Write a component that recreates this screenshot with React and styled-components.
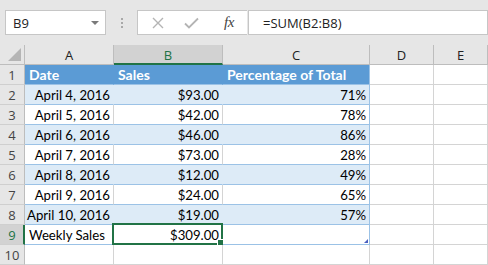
import React from "react";
import styled, { createGlobalStyle, css } from "styled-components";

const Global = createGlobalStyle`
  html, body { margin: 0; padding: 0; background: #ffffff; }
  body { width: 488px; height: 265px; overflow: hidden; }
  * { box-sizing: border-box; }
`;

const Page = styled.div`
  width: 488px;
  height: 265px;
  overflow: hidden;
  background: #ffffff;
  font-family: "Lato", "Liberation Sans", sans-serif;
`;

const Toolbar = styled.div`
  height: 45px;
  background: #e6e6e6;
  display: flex;
  align-items: flex-start;
  padding: 10px 0 0 5px;
`;

const NameBox = styled.div`
  width: 101px;
  height: 25px;
  background: #fff;
  border: 1px solid #c6c6c6;
  display: flex;
  align-items: center;
  justify-content: space-between;
  padding: 0 6px 0 7px;
  font-family: "Open Sans", "Noto Sans", sans-serif;
  font-size: 13px;
  color: #222;
`;

const Caret = styled.span`
  width: 0;
  height: 0;
  border-left: 4px solid transparent;
  border-right: 4px solid transparent;
  border-top: 4px solid #7a7a7a;
`;

const Grip = styled.div`
  width: 31px;
  height: 25px;
  display: flex;
  flex-direction: column;
  align-items: center;
  justify-content: center;
  gap: 2px;
  span {
    width: 2px;
    height: 2px;
    background: #a8a8a8;
  }
`;

const IconBox = styled.div`
  width: 110px;
  height: 25px;
  background: #fff;
  border: 1px solid #c6c6c6;
  border-right: none;
  display: flex;
  align-items: center;
  padding-left: 14px;
  gap: 20px;
`;

const Fx = styled.span`
  font-family: "Liberation Serif", serif;
  font-style: italic;
  font-size: 15px;
  color: #444;
  margin-left: 5px;
  letter-spacing: -0.5px;
`;

const FormulaBox = styled.div`
  flex: 1;
  height: 25px;
  background: #fff;
  border: 1px solid #c6c6c6;
  display: flex;
  align-items: center;
  padding-left: 14px;
  font-family: "Open Sans", "Noto Sans", sans-serif;
  font-size: 13px;
  color: #222;
`;

const Sep = styled.div`
  width: 1px;
  height: 25px;
  background: #e6e6e6;
`;

const Grid = styled.div`
  display: grid;
  grid-template-columns: 25px 89px 109px 147px 64px 1fr;
  grid-auto-rows: 20px;
`;

const Corner = styled.div`
  background: #e6e6e6;
  border-right: 1px solid #bdbdbd;
  border-bottom: 1px solid #bdbdbd;
  position: relative;
  &::after {
    content: "";
    position: absolute;
    right: 3px;
    bottom: 3px;
    width: 0;
    height: 0;
    border-left: 13px solid transparent;
    border-bottom: 13px solid #b5b5b5;
  }
`;

const ColHead = styled.div`
  background: ${(p) => (p.$active ? "#d2d2d2" : "#e6e6e6")};
  border-right: 1px solid #bdbdbd;
  border-bottom: ${(p) => (p.$active ? "2px solid #217346" : "1px solid #bdbdbd")};
  display: flex;
  align-items: center;
  justify-content: center;
  font-family: "Open Sans", "Noto Sans", sans-serif;
  font-size: 13px;
  color: ${(p) => (p.$active ? "#217346" : "#222")};
  padding-top: ${(p) => (p.$active ? "1px" : "0")};
`;

const RowHead = styled.div`
  background: ${(p) => (p.$active ? "#d2d2d2" : "#e6e6e6")};
  border-right: ${(p) => (p.$active ? "2px solid #217346" : "1px solid #bdbdbd")};
  border-bottom: 1px solid #cfcfcf;
  display: flex;
  align-items: center;
  justify-content: center;
  font-family: "Open Sans", "Noto Sans", sans-serif;
  font-size: 13px;
  color: ${(p) => (p.$active ? "#217346" : "#444")};
  padding-left: ${(p) => (p.$active ? "1px" : "0")};
`;

const Cell = styled.div`
  position: relative;
  display: flex;
  align-items: center;
  justify-content: ${(p) => (p.$align === "right" ? "flex-end" : "flex-start")};
  padding: 0 3px 0 4px;
  font-size: 13.2px;
  color: #000;
  white-space: nowrap;
  background: #fff;
  border-right: 1px solid #d4d4d4;
  border-bottom: 1px solid #d4d4d4;
  ${(p) =>
    p.$kind === "head" &&
    css`
      background: #5b9bd5;
      color: #fff;
      font-weight: 700;
      font-size: 14px;
      border-right-color: #5b9bd5;
      border-bottom-color: #9bc2e6;
    `}
  ${(p) =>
    p.$kind === "band" &&
    css`
      background: #ddebf7;
      border-right-color: #ddebf7;
      border-bottom-color: #9bc2e6;
    `}
  ${(p) =>
    p.$kind === "plain" &&
    css`
      border-bottom-color: #9bc2e6;
    `}
  ${(p) =>
    p.$edge &&
    css`
      border-right-color: #9bc2e6;
    `}
`;

const Selection = styled.div`
  position: absolute;
  left: -2px;
  top: -2px;
  right: -1px;
  bottom: -1px;
  border: 2px solid #217346;
  pointer-events: none;
  &::after {
    content: "";
    position: absolute;
    right: -4px;
    bottom: -4px;
    width: 6px;
    height: 6px;
    background: #217346;
    border: 1px solid #fff;
  }
`;

const ResizeHandle = styled.span`
  position: absolute;
  right: 1px;
  bottom: 1px;
  width: 0;
  height: 0;
  border-left: 4px solid transparent;
  border-bottom: 4px solid #4a5fbf;
`;

const rows = [
  ["April 4, 2016", "$93.00", "71%"],
  ["April 5, 2016", "$42.00", "78%"],
  ["April 6, 2016", "$46.00", "86%"],
  ["April 7, 2016", "$73.00", "28%"],
  ["April 8, 2016", "$12.00", "49%"],
  ["April 9, 2016", "$24.00", "65%"],
  ["April 10, 2016", "$19.00", "57%"],
];

const cols = ["A", "B", "C", "D", "E"];

export default function App() {
  return (
    <Page>
      <Global />
      <Toolbar>
        <NameBox>
          <span>B9</span>
          <Caret />
        </NameBox>
        <Grip>
          <span />
          <span />
          <span />
        </Grip>
        <IconBox>
          <svg width="12" height="12" viewBox="0 0 12 12">
            <path d="M1 1 L11 11 M11 1 L1 11" stroke="#b4b4b4" strokeWidth="1.4" fill="none" />
          </svg>
          <svg width="15" height="12" viewBox="0 0 15 12">
            <path d="M1 6.5 L5 10.5 L14 1.5" stroke="#b4b4b4" strokeWidth="1.8" fill="none" />
          </svg>
          <Fx>fx</Fx>
        </IconBox>
        <Sep />
        <FormulaBox>=SUM(B2:B8)</FormulaBox>
      </Toolbar>
      <Grid>
        <Corner />
        {cols.map((c) => (
          <ColHead key={c} $active={c === "B"}>
            {c}
          </ColHead>
        ))}

        <RowHead>1</RowHead>
        <Cell $kind="head">Date</Cell>
        <Cell $kind="head">Sales</Cell>
        <Cell $kind="head" $edge>Percentage of Total</Cell>
        <Cell />
        <Cell />

        {rows.map((r, i) => {
          const kind = i % 2 === 0 ? "band" : "plain";
          return (
            <React.Fragment key={r[0]}>
              <RowHead>{i + 2}</RowHead>
              <Cell $kind={kind} $align="right">{r[0]}</Cell>
              <Cell $kind={kind} $align="right">{r[1]}</Cell>
              <Cell $kind={kind} $align="right" $edge>{r[2]}</Cell>
              <Cell />
              <Cell />
            </React.Fragment>
          );
        })}

        <RowHead $active>9</RowHead>
        <Cell $kind="plain">Weekly Sales</Cell>
        <Cell $kind="plain" $align="right">
          $309.00
          <Selection />
        </Cell>
        <Cell $kind="plain" $edge>
          <ResizeHandle />
        </Cell>
        <Cell />
        <Cell />

        <RowHead>10</RowHead>
        <Cell />
        <Cell />
        <Cell />
        <Cell />
        <Cell />
      </Grid>
    </Page>
  );
}
